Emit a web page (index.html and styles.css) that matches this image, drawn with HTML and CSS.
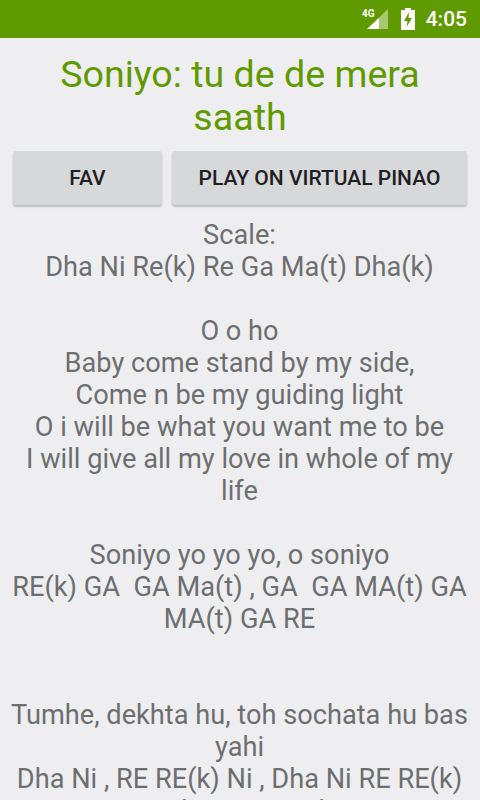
FILE: index.html
```html
<!DOCTYPE html>
<html lang="en">
<head>
    <meta charset="UTF-8">
    <meta name="viewport" content="width=device-width, initial-scale=1.0">
    <title>Soniyo</title>
    <link rel="stylesheet" href="styles.css">
</head>
<body>

    <div class="status-bar">
        <span class="net-label">4G</span>
        <svg class="signal" width="22" height="20" viewBox="0 0 22 20">
            <path d="M21 0V20H0Z" fill="#fff" opacity="0.45"/>
            <path d="M12 9V20H0L12 9Z" fill="#fff"/>
        </svg>
        <svg class="battery" width="14" height="22" viewBox="0 0 14 22">
            <path d="M4 0H10V2H14V22H0V2H4Z" fill="#fff"/>
            <path d="M8 4L3 13H6.5L5.5 19L11 10H7.5Z" fill="#5f9a00"/>
        </svg>
        <span class="clock">4:05</span>
    </div>

    <h1 class="title">Soniyo: tu de de mera saath</h1>

    <div class="actions">
        <button class="btn btn-fav">FAV</button>
        <button class="btn btn-play">PLAY ON VIRTUAL PINAO</button>
    </div>

    <p class="lyrics">Scale:
Dha Ni Re(k) Re Ga Ma(t) Dha(k)

O o ho
Baby come stand by my side,
Come n be my guiding light
O i will be what you want me to be
I will give all my love in whole of my life

Soniyo yo yo yo, o soniyo
RE(k) GA  GA Ma(t) , GA  GA MA(t) GA MA(t) GA RE


Tumhe, dekhta hu, toh sochata hu bas yahi
Dha Ni , RE RE(k) Ni , Dha Ni RE RE(k)
Ni Dha , Ni, Ni Dha</p>

</body>
</html>
```

FILE: styles.css
```css
html, body {
    margin: 0;
    height: 800px;
    overflow: hidden;
}
body {
    background-color: #eeeef0;
    font-family: Roboto, sans-serif;
}
.status-bar {
    height: 38px;
    background-color: #5f9a00;
    display: flex;
    align-items: center;
    justify-content: flex-end;
    padding-right: 13px;
    color: #fff;
}
.net-label {
    font-size: 10px;
    font-weight: bold;
    margin: 0 -8px 12px 0;
}
.signal {
    margin-right: 12px;
}
.battery {
    margin-right: 11px;
}
.clock {
    font-size: 21px;
    font-weight: 500;
}
.title {
    margin: 0;
    padding: 15px 14px 0;
    text-align: center;
    font-size: 37.6px;
    font-weight: 400;
    line-height: 43px;
    color: #5f9a00;
}
.actions {
    display: flex;
    gap: 10px;
    padding: 12px 13px 0;
}
.btn {
    height: 54px;
    border: none;
    border-radius: 3px;
    background-color: #d7d8d9;
    box-shadow: 0 2px 2px rgba(0, 0, 0, 0.2);
    font-family: Roboto, sans-serif;
    font-size: 21px;
    font-weight: 500;
    color: #1f2022;
}
.btn-fav {
    width: 149px;
}
.btn-play {
    flex: 1;
}
.lyrics {
    margin: 0;
    padding: 14px 10px 0 9px;
    text-align: center;
    white-space: pre-wrap;
    font-size: 27.2px;
    line-height: 32px;
    color: #6d6e70;
}
```
